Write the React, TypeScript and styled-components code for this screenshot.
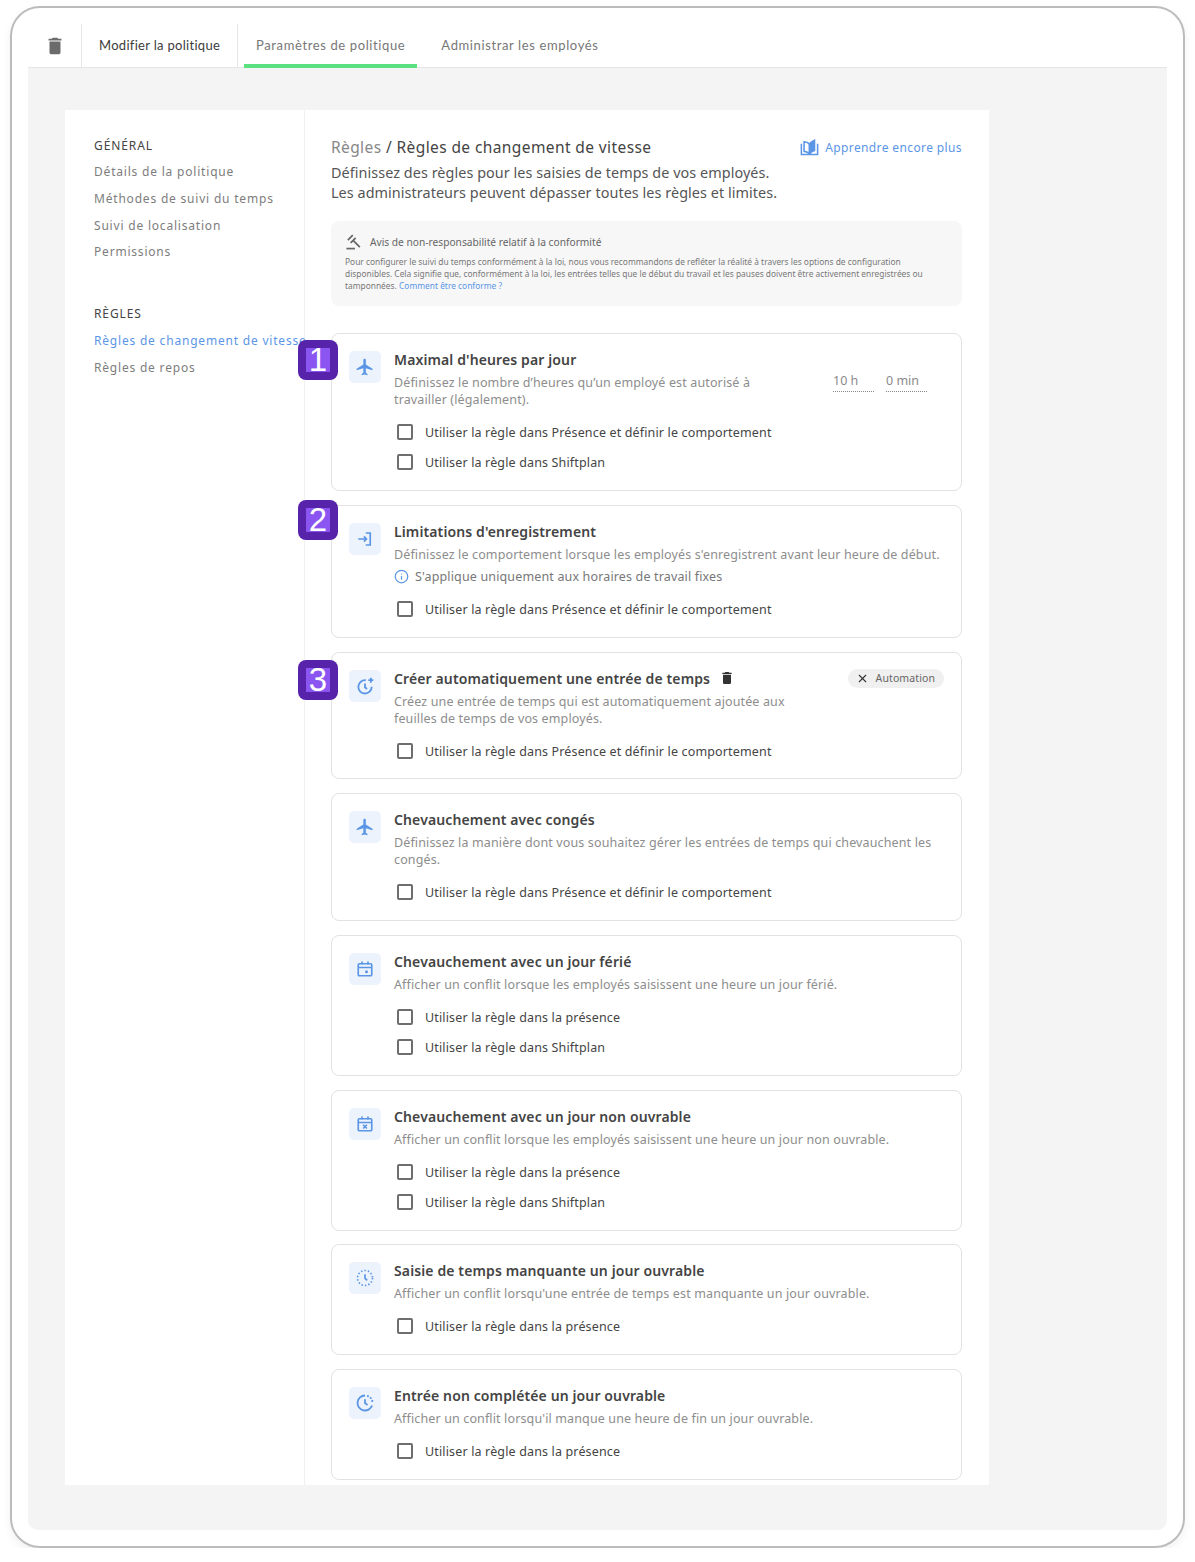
import * as React from 'react'
import styled, { createGlobalStyle } from 'styled-components'
import { Info, X } from 'lucide-react'

const Global = createGlobalStyle`
	html, body {
		margin: 0;
		background: #fff;
		font-family: 'Noto Sans', sans-serif;
	}
	* {
		box-sizing: border-box;
	}
`

const PLANE =
	'M21 16v-2l-8-5V3.5c0-.83-.67-1.5-1.5-1.5S10 2.67 10 3.5V9l-8 5v2l8-2.5V19l-2 1.5V22l3.5-1 3.5 1v-1.5L13 19v-5.5l8 2.5z'
const BIN =
	'M6 19c0 1.1.9 2 2 2h8c1.1 0 2-.9 2-2V7H6v12zM19 4h-3.5l-1-1h-5l-1 1H5v2h14V4z'

const Plane = () => (
	<svg width="20" height="20" viewBox="0 0 24 24" fill="#5b96e6">
		<path d={PLANE} />
	</svg>
)

const Enter = () => (
	<svg width="18" height="18" viewBox="0 0 24 24" fill="none" stroke="#5b96e6" strokeWidth="2.200">
		<path d="M13 4h6v16h-6" />
		<path d="M3 12h11M10.500 8.500 14 12l-3.500 3.500" />
	</svg>
)

const ClockPlus = () => (
	<svg width="20" height="20" viewBox="0 0 24 24" fill="none" stroke="#5b96e6" strokeWidth="2.200">
		<path d="M13 5.100A8 8 0 1 0 20 13" />
		<path d="M12 9v4.500l2.500 2" />
		<path d="M19 2v6M16 5h6" />
	</svg>
)

const CalendarDot = () => (
	<svg width="18" height="18" viewBox="0 0 24 24" fill="none" stroke="#5b96e6" strokeWidth="2.200">
		<rect x="3" y="5" width="18" height="16" rx="1.500" />
		<path d="M3 10h18M8 2v4M16 2v4" />
		<circle cx="14" cy="15.500" r="2" fill="#5b96e6" stroke="none" />
	</svg>
)

const CalendarCross = () => (
	<svg width="18" height="18" viewBox="0 0 24 24" fill="none" stroke="#5b96e6" strokeWidth="2.200">
		<rect x="3" y="5" width="18" height="16" rx="1.500" />
		<path d="M3 10h18M8 2v4M16 2v4M9.500 13l5 5M14.500 13l-5 5" />
	</svg>
)

const ClockDotted = () => (
	<svg width="18" height="18" viewBox="0 0 24 24" fill="none" stroke="#5b96e6" strokeWidth="2.200">
		<circle cx="12" cy="12" r="10" strokeDasharray="2 2.600" />
		<path d="M12 7v5.500l3 2.500" />
	</svg>
)

const ClockHalf = () => (
	<svg width="20" height="20" viewBox="0 0 24 24" fill="none" stroke="#5b96e6" strokeWidth="2.200">
		<path d="M12 3a9 9 0 1 0 8.500 12" />
		<path d="M15.500 3.700h.01M18.800 6h.01M20.700 9.500h.01" strokeLinecap="round" strokeWidth="2.600" />
		<path d="M12 7.500V12l3 2.500" />
	</svg>
)

type Rule = {
	icon: React.ReactNode
	title: string
	desc: React.ReactNode
	checks: string[]
	marker?: { n: number; top: number }
	note?: string
	limits?: boolean
	automation?: boolean
	gap: number
	height: number
}

const ATT = 'Utiliser la règle dans Présence et définir le comportement'
const SHIFT = 'Utiliser la règle dans Shiftplan'
const PRES = 'Utiliser la règle dans la présence'

const rules: Rule[] = [
	{
		icon: <Plane />,
		title: "Maximal d'heures par jour",
		desc: (
			<>
				Définissez le nombre d’heures qu’un employé est autorisé à
				<br />
				travailler (légalement).
			</>
		),
		checks: [ATT, SHIFT],
		marker: { n: 1, top: 6 },
		limits: true,
		gap: 14,
		height: 158,
	},
	{
		icon: <Enter />,
		title: "Limitations d'enregistrement",
		desc: 'Définissez le comportement lorsque les employés s\'enregistrent avant leur heure de début.',
		note: "S'applique uniquement aux horaires de travail fixes",
		checks: [ATT],
		marker: { n: 2, top: -6 },
		gap: 14,
		height: 133,
	},
	{
		icon: <ClockPlus />,
		title: 'Créer automatiquement une entrée de temps',
		desc: (
			<>
				Créez une entrée de temps qui est automatiquement ajoutée aux
				<br />
				feuilles de temps de vos employés.
			</>
		),
		checks: [ATT],
		marker: { n: 3, top: 7 },
		automation: true,
		gap: 14,
		height: 127,
	},
	{
		icon: <Plane />,
		title: 'Chevauchement avec congés',
		desc: 'Définissez la manière dont vous souhaitez gérer les entrées de temps qui chevauchent les congés.',
		checks: [ATT],
		gap: 14,
		height: 128,
	},
	{
		icon: <CalendarDot />,
		title: 'Chevauchement avec un jour férié',
		desc: 'Afficher un conflit lorsque les employés saisissent une heure un jour férié.',
		checks: [PRES, SHIFT],
		gap: 14,
		height: 141,
	},
	{
		icon: <CalendarCross />,
		title: 'Chevauchement avec un jour non ouvrable',
		desc: 'Afficher un conflit lorsque les employés saisissent une heure un jour non ouvrable.',
		checks: [PRES, SHIFT],
		gap: 13,
		height: 141,
	},
	{
		icon: <ClockDotted />,
		title: 'Saisie de temps manquante un jour ouvrable',
		desc: "Afficher un conflit lorsqu'une entrée de temps est manquante un jour ouvrable.",
		checks: [PRES],
		gap: 14,
		height: 111,
	},
	{
		icon: <ClockHalf />,
		title: 'Entrée non complétée un jour ouvrable',
		desc: "Afficher un conflit lorsqu'il manque une heure de fin un jour ouvrable.",
		checks: [PRES],
		gap: 0,
		height: 111,
	},
]

export default function App() {
	return (
		<>
			<Global />
			<Frame>
				<Tabs>
					<BinTab>
						<svg width="22" height="22" viewBox="0 0 24 24" fill="#6b6b6b">
							<path d={BIN} />
						</svg>
					</BinTab>
					<EditTab>Modifier la politique</EditTab>
					<Tab $active>Paramètres de politique</Tab>
					<Tab>Administrar les employés</Tab>
				</Tabs>
				<Panel>
					<Sheet>
						<Sidebar>
							<SideHead>GÉNÉRAL</SideHead>
							<SideLink>Détails de la politique</SideLink>
							<SideLink>Méthodes de suivi du temps</SideLink>
							<SideLink>Suivi de localisation</SideLink>
							<SideLink>Permissions</SideLink>
							<SideHead $second>RÈGLES</SideHead>
							<SideLink $active>Règles de changement de vitesse</SideLink>
							<SideLink>Règles de repos</SideLink>
						</Sidebar>
						<Main>
							<HeadRow>
								<Crumb>
									<CrumbRoot>Règles</CrumbRoot> / Règles de changement de vitesse
								</Crumb>
								<Learn>
									<svg width="19" height="17" viewBox="0 0 24 22" fill="none" stroke="#5b96e6" strokeWidth="2">
										<path d="M1.500 6v14h9c.8 0 1.500.5 1.500 1 0-.5.7-1 1.500-1h9V6" />
										<path d="M12 20V7c-1-2-3-3-7-3.500V16c4 .5 6 1.500 7 4" />
										<path d="M12 7c1-2 3-4 6.500-5.500V15c-3.500 1-5.500 3-6.500 5z" fill="#5b96e6" />
									</svg>
									Apprendre encore plus
								</Learn>
							</HeadRow>
							<Intro>
								Définissez des règles pour les saisies de temps de vos employés.
								<br />
								Les administrateurs peuvent dépasser toutes les règles et limites.
							</Intro>
							<Notice>
								<NoticeHead>
									<svg width="17" height="17" viewBox="0 0 24 24" fill="none" stroke="#666" strokeWidth="2.400">
										<path d="M4 10l7-7M8 14l7-7M11 10l10 10" />
										<path d="M2 22h12" />
									</svg>
									Avis de non-responsabilité relatif à la conformité
								</NoticeHead>
								<NoticeBody>
									Pour configurer le suivi du temps conformément à la loi, nous vous recommandons de refléter la
									réalité à travers les options de configuration disponibles. Cela signifie que, conformément à la
									loi, les entrées telles que le début du travail et les pauses doivent être activement enregistrées
									ou tamponnées. <NoticeLink>Comment être conforme ?</NoticeLink>
								</NoticeBody>
							</Notice>
							{rules.map(rule => (
								<Card key={rule.title} $gap={rule.gap} $height={rule.height}>
									{rule.marker && (
										<Marker $top={rule.marker.top}>
											<MarkerInner>{rule.marker.n}</MarkerInner>
										</Marker>
									)}
									<IconBox>{rule.icon}</IconBox>
									<CardBody>
										<TitleRow>
											<Title>{rule.title}</Title>
											{rule.automation && (
												<>
													<svg width="16" height="16" viewBox="0 0 24 24" fill="#333">
														<path d={BIN} />
													</svg>
													<Chip>
														<X size={13} color="#333" strokeWidth={2} />
														Automation
													</Chip>
												</>
											)}
										</TitleRow>
										<Desc>{rule.desc}</Desc>
										{rule.limits && (
											<Limits>
												<Limit>10 h</Limit>
												<Limit>0 min</Limit>
											</Limits>
										)}
										{rule.note && (
											<Note>
												<Info size={15} color="#5b96e6" strokeWidth={2} />
												{rule.note}
											</Note>
										)}
										<Checks>
											{rule.checks.map(check => (
												<Check key={check}>
													<Box />
													{check}
												</Check>
											))}
										</Checks>
									</CardBody>
								</Card>
							))}
						</Main>
					</Sheet>
				</Panel>
			</Frame>
		</>
	)
}

const Frame = styled.div`
	margin: 6px 0 0 10px;
	width: 1175px;
	height: 1542px;
	padding: 16px;
	display: flex;
	flex-direction: column;
	background: #fff;
	border: 2px solid #bcbcbc;
	border-radius: 30px;
	box-shadow: 0 4px 10px rgba(0, 0, 0, 0.06);
`

const Tabs = styled.div`
	display: flex;
	height: 44px;
	flex: none;
	border-bottom: 1px solid #e6e6e6;
`

const BinTab = styled.div`
	width: 54px;
	display: flex;
	align-items: center;
	justify-content: center;
	border-right: 1px solid #e6e6e6;
`

const EditTab = styled.div`
	width: 156px;
	padding: 0 0 2px 17px;
	display: flex;
	align-items: center;
	border-right: 1px solid #e6e6e6;
	font-family: Lato, sans-serif;
	font-size: 13px;
	letter-spacing: 0.3px;
	color: #3c3c3c;
`

const Tab = styled.div<{ $active?: boolean }>`
	margin-left: ${p => (p.$active ? '6px' : '12px')};
	padding: 2px 12px 0;
	display: flex;
	align-items: center;
	font-family: Lato, sans-serif;
	font-size: 13px;
	letter-spacing: 0.62px;
	color: #777;
	margin-bottom: -1px;
	border-bottom: 4px solid ${p => (p.$active ? '#5ae07f' : 'transparent')};
`

const Panel = styled.div`
	flex: 1;
	padding: 42px 178px 45px 37px;
	background: #f4f4f4;
	border-radius: 0 0 10px 10px;
	min-height: 0;
`

const Sheet = styled.div`
	height: 100%;
	display: flex;
	background: #fff;
	overflow: hidden;
`

const Sidebar = styled.div`
	width: 240px;
	flex: none;
	padding: 27px 0 0 29px;
	border-right: 1px solid #f0f0f0;
	white-space: nowrap;
`

const SideHead = styled.div<{ $second?: boolean }>`
	font-size: 12px;
	line-height: 18px;
	letter-spacing: 0.9px;
	color: #444;
	margin-top: ${p => (p.$second ? '44px' : '0')};
	margin-bottom: ${p => (p.$second ? '9px' : '8px')};
`

const SideLink = styled.div<{ $active?: boolean }>`
	font-size: 12px;
	line-height: 18px;
	letter-spacing: 0.8px;
	margin-bottom: 8.800px;
	color: ${p => (p.$active ? '#5b96e6' : '#7d7d7d')};
`

const Main = styled.div`
	flex: 1;
	min-width: 0;
	padding: 26px 27px 0 26px;
`

const HeadRow = styled.div`
	display: flex;
	justify-content: space-between;
	align-items: center;
	height: 22px;
`

const Crumb = styled.div`
	font-size: 15.500px;
	letter-spacing: 0.4px;
	color: #444;
`

const CrumbRoot = styled.span`
	color: #888;
`

const Learn = styled.div`
	display: flex;
	align-items: center;
	gap: 6px;
	font-size: 12px;
	letter-spacing: 0.38px;
	color: #5b96e6;
`

const Intro = styled.div`
	margin-top: 5px;
	font-size: 14.400px;
	line-height: 20px;
	letter-spacing: 0.06px;
	color: #555;
`

const Notice = styled.div`
	margin-top: 18px;
	margin-bottom: 27px;
	height: 85px;
	padding: 12px 14px 0;
	border-radius: 8px;
	background: #f7f7f7;
`

const NoticeHead = styled.div`
	display: flex;
	align-items: center;
	gap: 8px;
	font-size: 10.200px;
	line-height: 16px;
	color: #666;
`

const NoticeBody = styled.div`
	margin-top: 6px;
	font-size: 8.400px;
	line-height: 12px;
	color: #777;
`

const NoticeLink = styled.span`
	color: #5b96e6;
`

const Card = styled.div<{ $gap: number; $height: number }>`
	position: relative;
	height: ${p => p.$height}px;
	margin-bottom: ${p => p.$gap}px;
	padding: 17px 17px 0;
	display: flex;
	gap: 13px;
	border: 1px solid #e2e2e2;
	border-radius: 8px;
`

const Marker = styled.div<{ $top: number }>`
	position: absolute;
	left: -34px;
	top: ${p => p.$top}px;
	width: 40px;
	height: 40px;
	display: flex;
	align-items: center;
	justify-content: center;
	background: #5723ab;
	border-radius: 8px;
`

const MarkerInner = styled.div`
	width: 24px;
	height: 24px;
	display: flex;
	align-items: center;
	justify-content: center;
	background: #8a55f0;
	color: #fff;
	font-family: 'Liberation Sans', sans-serif;
	font-size: 33px;
	line-height: 24px;
`

const IconBox = styled.div`
	width: 32px;
	height: 32px;
	flex: none;
	display: flex;
	align-items: center;
	justify-content: center;
	background: #edf3fc;
	border-radius: 5px;
`

const CardBody = styled.div`
	position: relative;
	flex: 1;
	min-width: 0;
`

const TitleRow = styled.div`
	display: flex;
	align-items: center;
	gap: 9px;
	height: 20px;
	margin-top: -2px;
`

const Title = styled.div`
	font-size: 14px;
	font-weight: 600;
	letter-spacing: 0.12px;
	color: #444;
`

const Chip = styled.div`
	margin-left: auto;
	height: 19px;
	padding: 0 9px 0 8.500px;
	display: flex;
	align-items: center;
	gap: 6.500px;
	font-size: 10.500px;
	letter-spacing: 0.1px;
	color: #666;
	background: #f0f0f0;
	border-radius: 10px;
`

const Desc = styled.div`
	margin-top: 5px;
	font-size: 12.500px;
	line-height: 17px;
	letter-spacing: 0.13px;
	color: #8d8d8d;
`

const Limits = styled.div`
	position: absolute;
	right: 17px;
	top: 21px;
	display: flex;
	gap: 12px;
`

const Limit = styled.div`
	width: 41px;
	height: 20px;
	font-size: 12.500px;
	line-height: 18px;
	color: #8a8a8a;
	border-bottom: 1px dotted #888;
`

const Note = styled.div`
	margin-top: 5px;
	display: flex;
	align-items: center;
	gap: 6px;
	font-size: 12.500px;
	line-height: 17px;
	letter-spacing: 0.15px;
	color: #777;
`

const Checks = styled.div`
	margin-top: 15px;
	display: flex;
	flex-direction: column;
	gap: 12px;
`

const Check = styled.div`
	display: flex;
	align-items: center;
	gap: 12px;
	margin-left: 3px;
	height: 18px;
	font-size: 12.500px;
	letter-spacing: 0.15px;
	color: #444;
`

const Box = styled.div`
	width: 16px;
	height: 16px;
	flex: none;
	border: 2px solid #6e6e6e;
	border-radius: 2px;
`
